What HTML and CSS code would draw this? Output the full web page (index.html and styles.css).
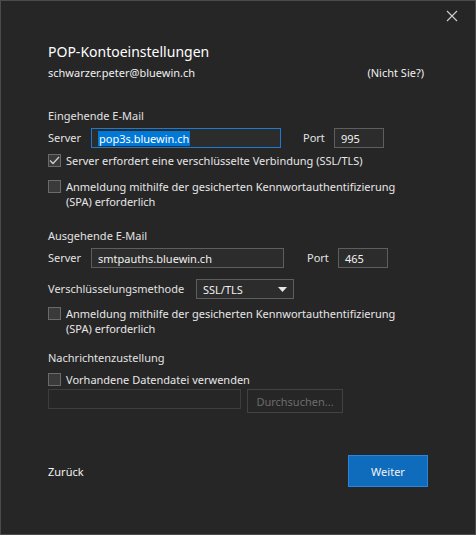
FILE: index.html
```html
<!DOCTYPE html>
<html lang="de">
<head>
<meta charset="utf-8">
<title>POP-Kontoeinstellungen</title>
<link rel="stylesheet" href="styles.css">
</head>
<body>
<div class="window">
  <div class="titlebar">
    <svg class="close" width="12" height="12" viewBox="0 0 12 12"><path d="M1 1 L11 11 M11 1 L1 11" stroke="#cfcfcf" stroke-width="1.1" fill="none"/></svg>
  </div>
  <div class="content">
    <div class="title">POP-Kontoeinstellungen</div>
    <div class="account-row">
      <span>schwarzer.peter@bluewin.ch</span>
      <span class="notyou">(Nicht Sie?)</span>
    </div>

    <div class="section-label first">Eingehende E-Mail</div>
    <div class="server-row">
      <span class="lbl server-lbl">Server</span>
      <div class="field server focus"><span class="sel">pop3s.bluewin.ch</span></div>
      <span class="lbl port-lbl">Port</span>
      <div class="field port">995</div>
    </div>
    <div class="check-row c1">
      <span class="box"><svg width="11" height="9" viewBox="0 0 11 9"><path d="M1 4.5 L4 7.5 L10 1" stroke="#cfcfcf" stroke-width="1.3" fill="none"/></svg></span>
      <span class="ctext">Server erfordert eine verschlüsselte Verbindung (SSL/TLS)</span>
    </div>
    <div class="check-row c2">
      <span class="box"></span>
      <span class="ctext">Anmeldung mithilfe der gesicherten Kennwortauthentifizierung<br>(SPA) erforderlich</span>
    </div>

    <div class="section-label second">Ausgehende E-Mail</div>
    <div class="server-row">
      <span class="lbl server-lbl">Server</span>
      <div class="field server2">smtpauths.bluewin.ch</div>
      <span class="lbl port-lbl2">Port</span>
      <div class="field port">465</div>
    </div>
    <div class="enc-row">
      <span class="lbl enc-lbl">Verschlüsselungsmethode</span>
      <div class="field select">SSL/TLS<svg width="9" height="5" viewBox="0 0 9 5"><path d="M0 0 H9 L4.5 5 Z" fill="#e6e6e6"/></svg></div>
    </div>
    <div class="check-row c3">
      <span class="box"></span>
      <span class="ctext">Anmeldung mithilfe der gesicherten Kennwortauthentifizierung<br>(SPA) erforderlich</span>
    </div>

    <div class="section-label third">Nachrichtenzustellung</div>
    <div class="check-row c4">
      <span class="box"></span>
      <span class="ctext">Vorhandene Datendatei verwenden</span>
    </div>
    <div class="browse-row">
      <div class="field disabled"></div>
      <div class="btn-disabled">Durchsuchen...</div>
    </div>

    <div class="footer">
      <span class="back">Zurück</span>
      <div class="primary">Weiter</div>
    </div>
  </div>
</div>
</body>
</html>
```

FILE: styles.css
```css
html, body {
  margin: 0;
  padding: 0;
  background: #262626;
}
body {
  font-family: "Noto Sans", "Open Sans", sans-serif;
  font-size: 11px;
  color: #e2e2e2;
}
.window {
  width: 476px;
  height: 535px;
  box-sizing: border-box;
  border: 1px solid #4b4b4b;
  background: #262626;
  display: flex;
  flex-direction: column;
}
.titlebar {
  height: 29px;
  display: flex;
  justify-content: flex-end;
  align-items: flex-start;
  padding: 9px 17px 0 0;
  box-sizing: border-box;
}
.close { display: block; }
.content {
  padding-left: 47px;
  padding-right: 47px;
  display: flex;
  flex-direction: column;
  flex: 1;
}
.title {
  font-size: 14px;
  color: #ffffff;
  line-height: 20px;
  margin-top: 12px;
}
.account-row {
  display: flex;
  justify-content: space-between;
  line-height: 16px;
  margin-top: 3px;
  color: #f0f0f0;
  padding-right: 4px;
}
.section-label {
  line-height: 16px;
  color: #e2e2e2;
}
.section-label.first { margin-top: 27px; }
.section-label.second { margin-top: 19px; }
.section-label.third { margin-top: 14px; }
.server-row {
  display: flex;
  align-items: center;
  margin-top: 4px;
}
.lbl { line-height: 16px; flex: none; }
.server-lbl { width: 43px; }
.field {
  box-sizing: border-box;
  height: 20px;
  border: 1px solid #5e5e5e;
  background: #2c2c2c;
  display: flex;
  align-items: center;
  padding-left: 6px;
  color: #f0f0f0;
  flex: none;
}
.server { width: 190px; }
.server2 { width: 193px; }
.focus { border-color: #1a7ad4; }
.sel {
  background: #0078d7;
  color: #ffffff;
  line-height: 15px;
  padding: 0 1px;
}
.port-lbl { margin-left: 22px; width: 31px; }
.port-lbl2 { margin-left: 23px; width: 31px; }
.port { width: 50px; }
.check-row {
  display: flex;
  align-items: flex-start;
}
.box {
  width: 13px;
  height: 13px;
  box-sizing: border-box;
  border: 1px solid #6a6a6a;
  background: #3a3a3a;
  display: flex;
  align-items: center;
  justify-content: center;
  flex: none;
  margin-top: 1px;
}
.ctext {
  margin-left: 5px;
  line-height: 15px;
  color: #e6e6e6;
}
.c1 { margin-top: 5px; }
.c2 { margin-top: 11px; }
.c3 { margin-top: 7px; }
.c4 { margin-top: 6px; }
.enc-row {
  display: flex;
  align-items: center;
  margin-top: 11px;
}
.enc-lbl { width: 148px; }
.select {
  width: 98px;
  justify-content: space-between;
  padding-right: 6px;
}
.browse-row {
  display: flex;
  align-items: flex-start;
  margin-top: 2px;
}
.disabled {
  width: 193px;
  height: 20px;
  background: transparent;
  border-color: #3d3d3d;
}
.btn-disabled {
  box-sizing: border-box;
  width: 96px;
  height: 24px;
  margin-left: 6px;
  border: 1px solid #424242;
  color: #6c6c6c;
  display: flex;
  align-items: center;
  justify-content: center;
}
.footer {
  display: flex;
  justify-content: space-between;
  align-items: center;
  margin-top: 42px;
}
.back { color: #f2f2f2; }
.primary {
  box-sizing: border-box;
  width: 80px;
  height: 32px;
  background: #0f6cbd;
  border: 1px solid #2a86db;
  color: #f2f2f2;
  display: flex;
  align-items: center;
  justify-content: center;
}
```
